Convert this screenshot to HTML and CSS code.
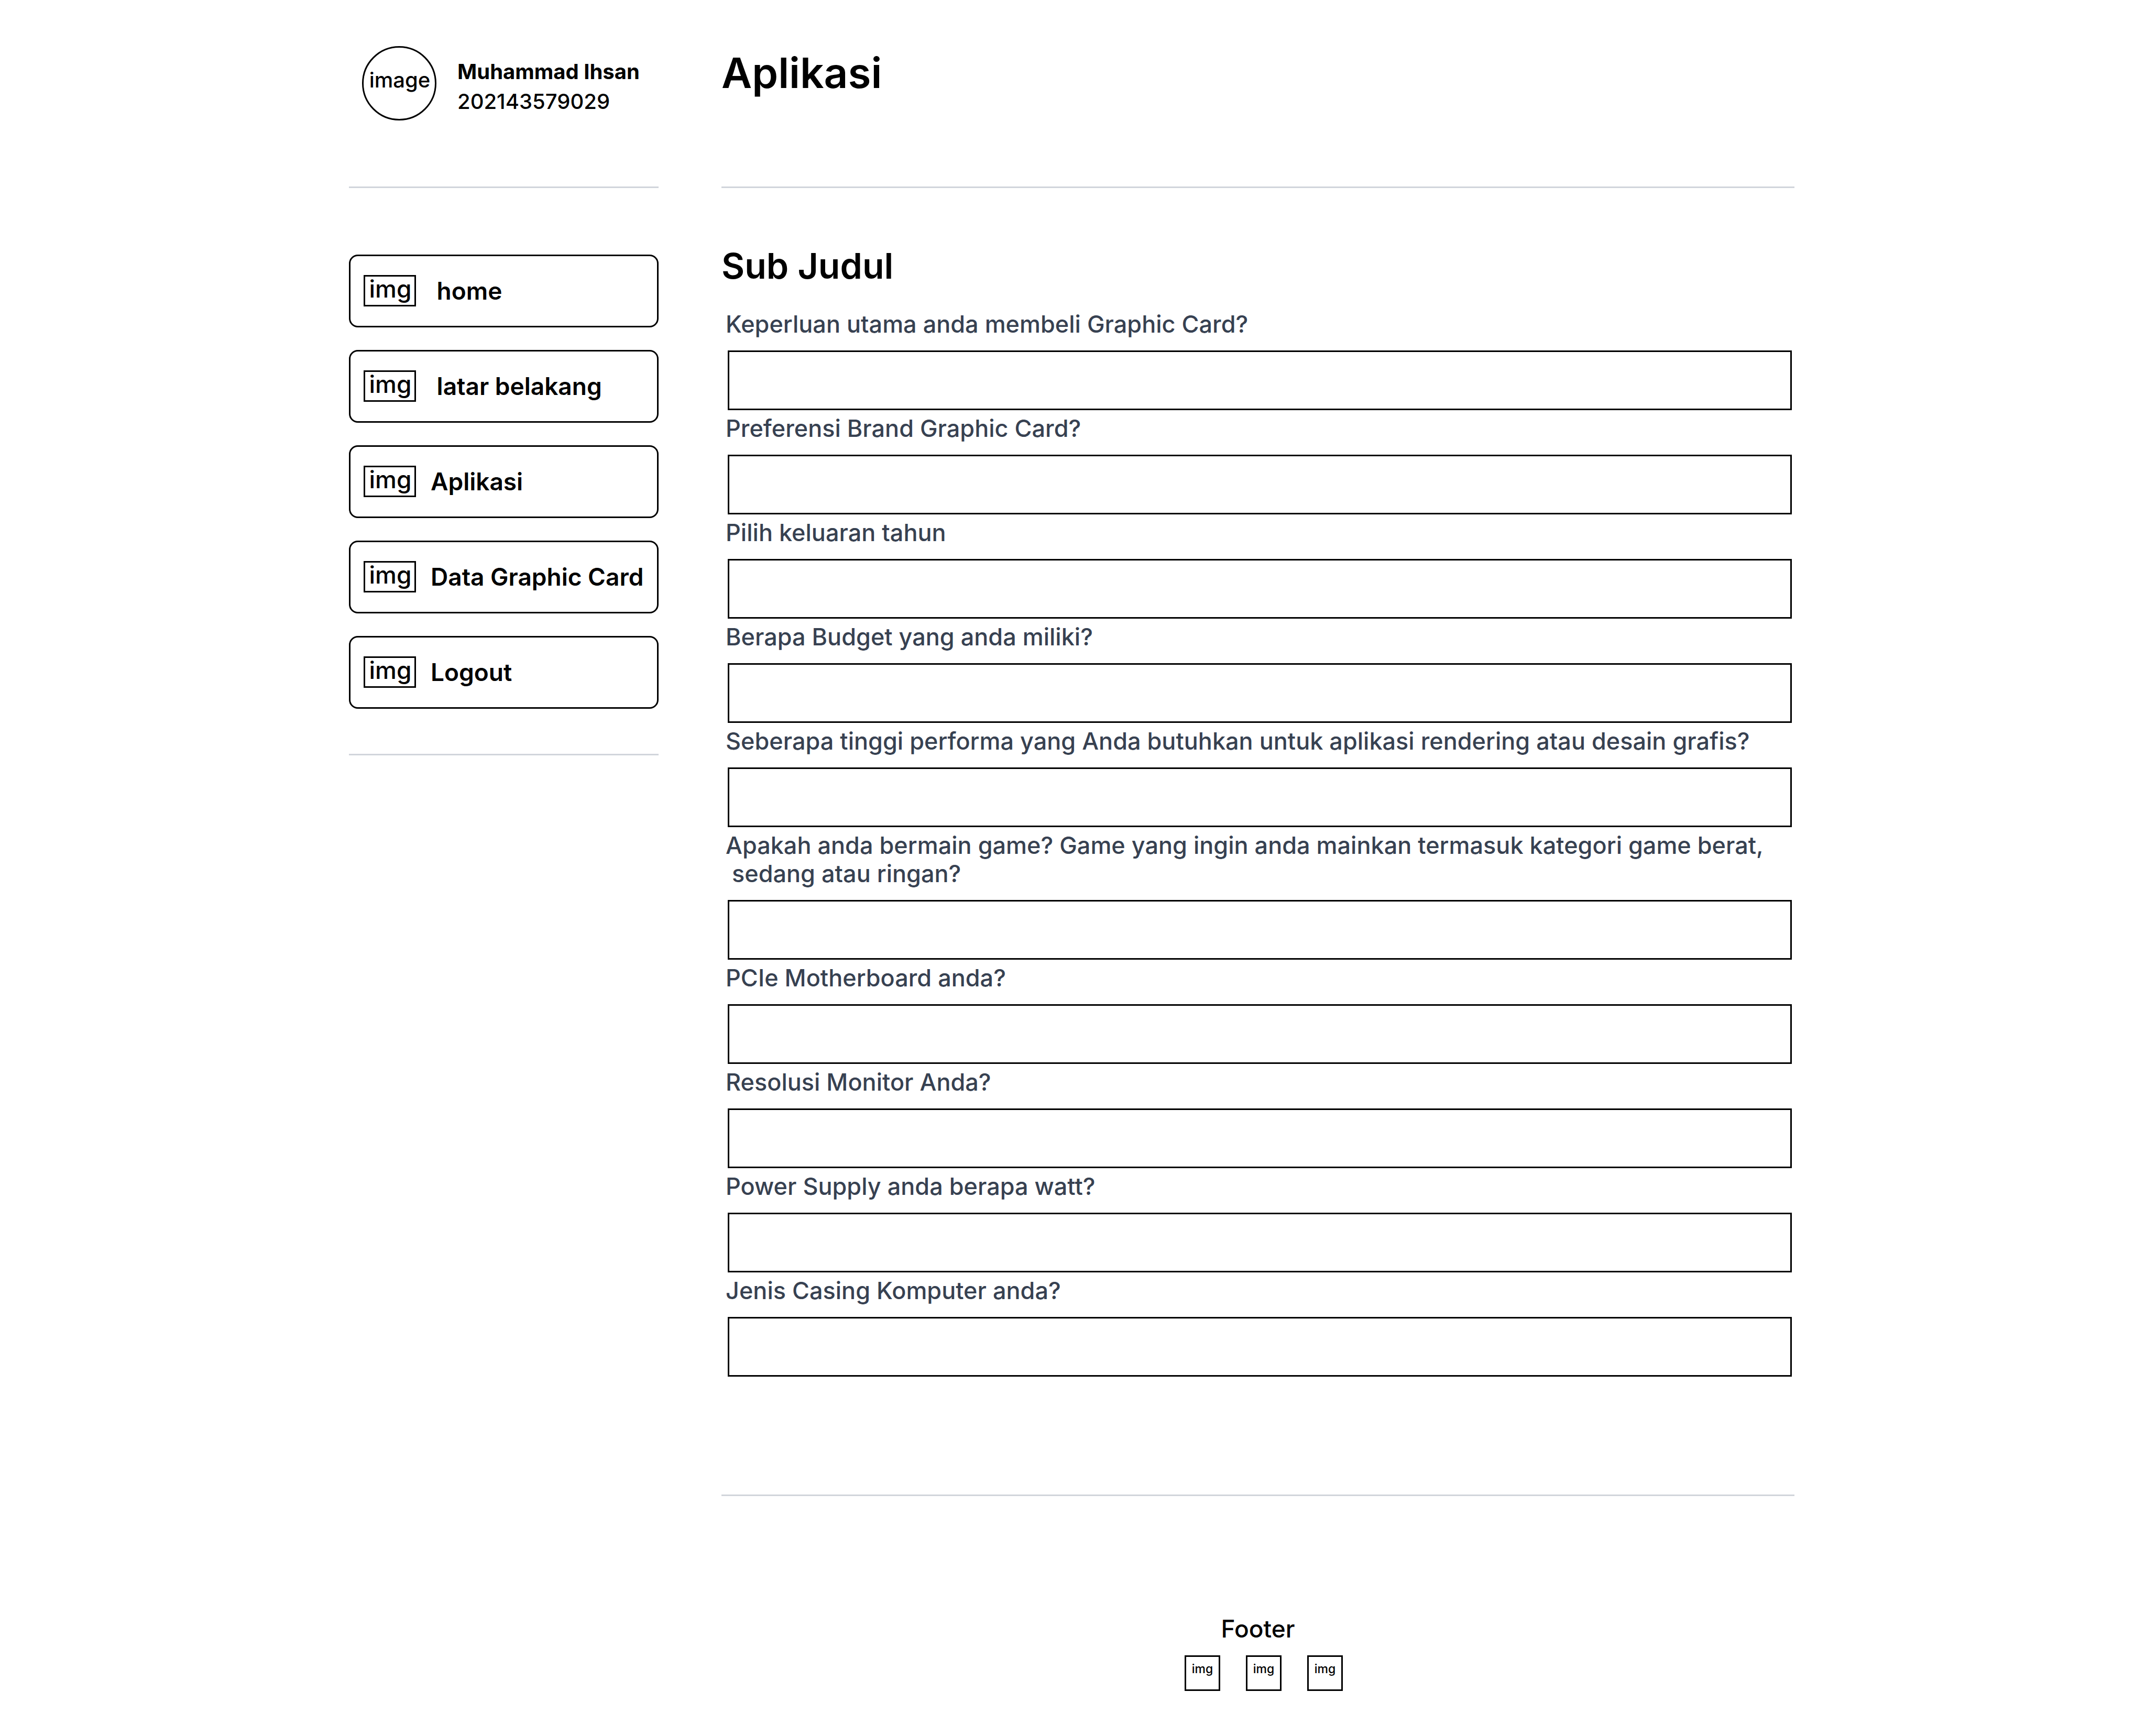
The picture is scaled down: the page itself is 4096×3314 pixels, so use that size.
FILE: index.html
```html
<!DOCTYPE html>
<html lang="id">
<head>
<meta charset="utf-8">
<title>Aplikasi</title>
<link rel="stylesheet" href="styles.css">
</head>
<body>
<div class="page">
  <aside class="sidebar">
    <div class="top profile">
      <span class="avatar">image</span>
      <div class="identity">
        <strong class="name">Muhammad Ihsan</strong>
        <span class="number">202143579029</span>
      </div>
    </div>
    <nav class="nav">
      <a class="nav-link" href="#home"><span class="thumb">img</span><span class="nav-text"> home</span></a>
      <a class="nav-link" href="#latar-belakang"><span class="thumb">img</span><span class="nav-text"> latar belakang</span></a>
      <a class="nav-link" href="#aplikasi"><span class="thumb">img</span><span class="nav-text">Aplikasi</span></a>
      <a class="nav-link" href="#data"><span class="thumb">img</span><span class="nav-text">Data Graphic Card</span></a>
      <a class="nav-link" href="#logout"><span class="thumb">img</span><span class="nav-text">Logout</span></a>
    </nav>
  </aside>
  <div class="content">
    <header class="top">
      <h1 class="title">Aplikasi</h1>
    </header>
    <main class="main">
      <h2 class="subtitle">Sub Judul</h2>
      <form class="form">
        <label class="label" for="q1">Keperluan utama anda membeli Graphic Card?</label>
        <input class="input" id="q1" type="text">
        <label class="label" for="q2">Preferensi Brand Graphic Card?</label>
        <input class="input" id="q2" type="text">
        <label class="label" for="q3">Pilih keluaran tahun</label>
        <input class="input" id="q3" type="text">
        <label class="label" for="q4">Berapa Budget yang anda miliki?</label>
        <input class="input" id="q4" type="text">
        <label class="label" for="q5">Seberapa tinggi performa yang Anda butuhkan untuk aplikasi rendering atau desain grafis?</label>
        <input class="input" id="q5" type="text">
        <label class="label" for="q6">Apakah anda bermain game? Game yang ingin anda mainkan termasuk kategori game berat,
 sedang atau ringan?</label>
        <input class="input" id="q6" type="text">
        <label class="label" for="q7">PCIe Motherboard anda?</label>
        <input class="input" id="q7" type="text">
        <label class="label" for="q8">Resolusi Monitor Anda?</label>
        <input class="input" id="q8" type="text">
        <label class="label" for="q9">Power Supply anda berapa watt?</label>
        <input class="input" id="q9" type="text">
        <label class="label" for="q10">Jenis Casing Komputer anda?</label>
        <input class="input" id="q10" type="text">
      </form>
    </main>
    <footer class="footer">
      <p class="footer-text">Footer</p>
      <div class="footer-icons">
        <span class="footer-icon">img</span>
        <span class="footer-icon">img</span>
        <span class="footer-icon">img</span>
      </div>
    </footer>
  </div>
</div>
</body>
</html>
```
FILE: styles.css
```css
* { box-sizing: border-box; }

body {
  margin: 0;
  min-height: 100vh;
  background: #fff;
  color: #000;
  font-family: Inter, "Liberation Sans", sans-serif;
  font-size: 46px;
  font-weight: 500;
  line-height: 54px;
}

.page {
  display: grid;
  grid-template-columns: 591px minmax(0, 1fr);
  column-gap: 120px;
  align-items: start;
  padding: 0 671px 86px 666px;
}

.top {
  min-height: 359px;
  padding-top: 88px;
  border-bottom: 3px solid #d1d5db;
}

/* Sidebar */
.profile {
  display: flex;
  align-items: flex-start;
  gap: 40px;
  padding-left: 25px;
}

.avatar {
  display: flex;
  align-items: center;
  justify-content: center;
  flex: none;
  width: 142px;
  height: 142px;
  padding: 0 0 12px 2px;
  border: 3px solid #000;
  border-radius: 50%;
  font-size: 40px;
}

.identity {
  display: flex;
  flex-direction: column;
  padding-top: 20px;
  font-size: 40px;
  line-height: 57px;
  white-space: nowrap;
}

.name { font-weight: 700; }

.nav {
  display: flex;
  flex-direction: column;
  gap: 43px;
  padding: 127px 0 86px;
  border-bottom: 3px solid #d1d5db;
}

.nav-link {
  display: flex;
  align-items: center;
  gap: 28px;
  height: 139px;
  padding: 0 25px 2px;
  border: 3px solid #000;
  border-radius: 17px;
  color: inherit;
  font-weight: 600;
  text-decoration: none;
}

.nav-text { white-space: pre; }

.thumb {
  display: flex;
  align-items: center;
  justify-content: center;
  flex: none;
  width: 100px;
  height: 60px;
  padding: 0 0 7px 2px;
  border: 3px solid #000;
  font-weight: 500;
}

/* Content */
.title {
  margin: 0;
  font-size: 80px;
  font-weight: 600;
  line-height: 102px;
}

.main {
  padding: 107px 0 225px;
  border-bottom: 3px solid #d1d5db;
}

.subtitle {
  margin: 0 0 36px;
  font-size: 68px;
  font-weight: 600;
  line-height: 82px;
}

.form {
  display: flex;
  flex-direction: column;
  padding: 0 5px 0 12px;
}

.label {
  margin-left: -4px;
  padding: 8px 0 23px;
  color: #374151;
  font-size: 45px;
  white-space: pre;
}

.input {
  width: 100%;
  height: 114px;
  padding: 0 24px;
  border: 3px solid #000;
  border-radius: 0;
  background: #fff;
  font: inherit;
}

/* Footer */
.footer {
  display: flex;
  flex-direction: column;
  align-items: center;
  gap: 24px;
  padding-top: 226px;
}

.footer-text { margin: 0; }

.footer-icons {
  display: flex;
  gap: 49px;
  padding-left: 22px;
}

.footer-icon {
  display: flex;
  align-items: center;
  justify-content: center;
  width: 68px;
  height: 68px;
  padding-bottom: 17px;
  border: 3px solid #000;
  font-size: 23px;
  line-height: 28px;
}
```
